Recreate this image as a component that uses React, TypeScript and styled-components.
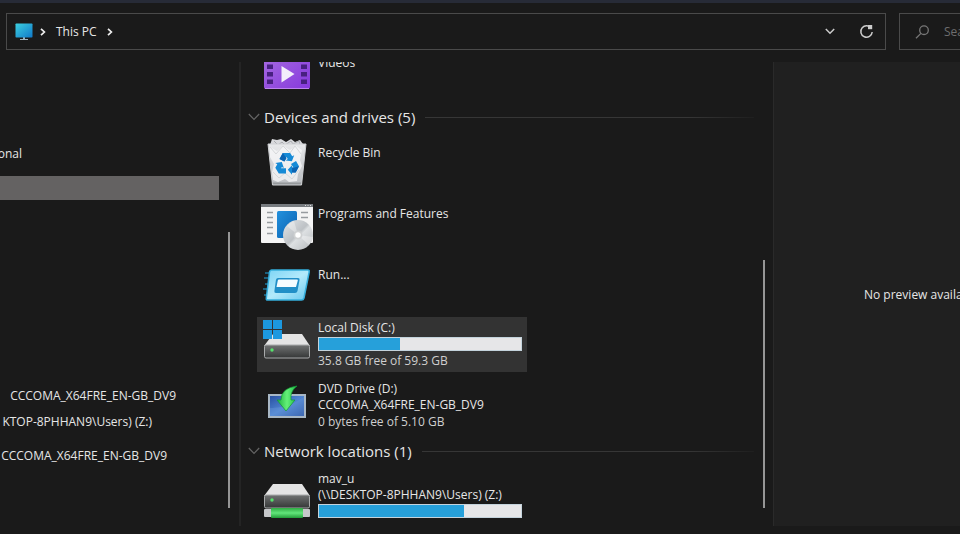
import React from "react";
import styled, { createGlobalStyle } from "styled-components";

const GlobalStyle = createGlobalStyle`
  * { box-sizing: border-box; }
  html, body, #root { height: 100%; }
  body {
    margin: 0;
    overflow: hidden;
    background: #1a1a1a;
    color: #e6e6e6;
    font: 12px/16px "Open Sans", "Noto Sans", sans-serif;
  }
  button, input { font: inherit; color: inherit; }
  svg { display: block; flex: none; }
`;

const Window = styled.div`
  display: flex;
  flex-direction: column;
  height: 100%;
  min-height: 0;
  border-top: 3px solid #272b37;
`;

const Toolbar = styled.header`
  display: grid;
  grid-template-columns: minmax(0, 1fr) 61px;
  gap: 13px;
  padding: 10px 0 12px 6px;
`;

const AddressBar = styled.nav`
  display: flex;
  align-items: center;
  height: 37px;
  padding: 0 11px 0 8px;
  border: 1px solid #4a4a4a;
`;

const Crumb = styled.button`
  display: flex;
  align-items: center;
  padding: 0;
  border: 0;
  background: none;
`;

const CrumbLabel = styled(Crumb)`
  margin: 0 10px;
`;

const Chevron = styled.span`
  padding-left: 7px;
`;

const Actions = styled.div`
  display: flex;
  gap: 24px;
  margin-left: auto;
`;

const IconButton = styled.button`
  padding: 0;
  border: 0;
  background: none;
`;

const SearchBox = styled.label`
  display: flex;
  align-items: center;
  gap: 14px;
  height: 37px;
  padding-left: 15px;
  border: 1px solid #4a4a4a;
  border-right: 0;
  overflow: hidden;
`;

const SearchInput = styled.input`
  flex: 1 0 100px;
  min-width: 0;
  padding: 0;
  border: 0;
  outline: 0;
  background: none;
  &::placeholder { color: #6d6d6d; opacity: 1; }
`;

const Panes = styled.div`
  display: grid;
  grid-template-columns: 241px minmax(0, 1fr) 187px;
  flex: 1;
  min-height: 0;
  margin-bottom: 8px;
`;

const NavPane = styled.aside`
  display: flex;
  border-right: 2px solid #242424;
  overflow: hidden;
`;

const NavTree = styled.div`
  flex: 1;
  padding-top: 78px;
`;

const NavGroup = styled.div<{ $gap?: number }>`
  margin-bottom: ${(p) => p.$gap ?? 0}px;
`;

const NavItem = styled.button<{ $width?: number; $selected?: boolean }>`
  display: flex;
  align-items: center;
  justify-content: flex-end;
  width: ${(p) => (p.$width ? `${p.$width}px` : "100%")};
  height: ${(p) => (p.$selected ? 24 : 26)}px;
  padding: 2px 0 0;
  border: 0;
  background: ${(p) => (p.$selected ? "#646262" : "none")};
  white-space: nowrap;
`;

const ScrollTrack = styled.div<{ $top: number; $side: number }>`
  display: flex;
  padding: ${(p) => p.$top}px ${(p) => p.$side}px 18px 9px;
`;

const ScrollThumb = styled.div`
  width: 2px;
  background: #959595;
`;

const ContentPane = styled.main`
  display: flex;
  min-width: 0;
  overflow: hidden;
`;

const FileList = styled.div`
  flex: 1;
  min-width: 0;
  margin-top: -18px;
  padding-left: 7px;
`;

const Entries = styled.div`
  display: flex;
  flex-direction: column;
  gap: 6px;
  padding-left: 9px;
`;

const GroupHeader = styled.h2`
  display: flex;
  align-items: center;
  height: 35px;
  margin: 0;
  padding-top: 1px;
  font-size: 15px;
  font-weight: 400;
  line-height: 20px;
  white-space: nowrap;
  &::after {
    content: "";
    flex: 1;
    height: 1px;
    margin-left: 10px;
    background: linear-gradient(90deg, #363636 80%, #1f1f1f);
  }
`;

const GroupToggle = styled.button`
  display: flex;
  align-items: center;
  gap: 4px;
  padding: 0;
  border: 0;
  background: none;
`;

const Entry = styled.article<{ $selected?: boolean }>`
  display: grid;
  grid-template-columns: 52px minmax(0, 1fr);
  gap: 5px;
  width: 100%;
  max-width: 270px;
  height: 55px;
  padding: 0 5px 0 4px;
  background: ${(p) => (p.$selected ? "#333333" : "transparent")};
`;

const EntryIcon = styled.div<{ $top: number }>`
  display: flex;
  align-items: flex-start;
  justify-content: center;
  padding-top: ${(p) => p.$top}px;
`;

const EntryText = styled.div<{ $single?: boolean }>`
  padding-top: ${(p) => (p.$single ? 11 : 3)}px;
  white-space: nowrap;
`;

const Note = styled.div`
  margin-top: 1px;
  color: #cfcfcf;
`;

const Meter = styled.div`
  height: 14px;
  margin: 1px 0 2px;
  border: 1px solid #c4d3dc;
  background: #e6e6e8;
`;

const MeterFill = styled.div`
  height: 100%;
  background: #26a0da;
`;

const Preview = styled.aside`
  display: flex;
  align-items: center;
  padding: 2px 0 0 90px;
  border-left: 1px solid #2a2a2a;
  background: #202020;
  white-space: nowrap;
  overflow: hidden;
`;

const ComputerIcon = () => (
  <svg width="18" height="18" viewBox="0 0 18 18">
    <defs>
      <linearGradient id="screen" x1="0" y1="0" x2="1" y2="1">
        <stop offset="0" stopColor="#3cd0e0" /><stop offset="1" stopColor="#1078c8" />
      </linearGradient>
    </defs>
    <path d="M8 14h2v2h3v1H5v-1h3z" fill="#9fb0ba" />
    <rect x="0.5" y="0.5" width="17" height="14" rx="0.8" fill="url(#screen)" />
  </svg>
);

const SmallChevron = () => (
  <svg width="6" height="8" viewBox="0 0 6 8" fill="none" stroke="#eee" strokeWidth="1.7">
    <path d="M1 0.8 4.4 4 1 7.2" />
  </svg>
);

const DownChevron = () => (
  <svg width="10" height="16" viewBox="0 0 10 16" fill="none" stroke="#ccc" strokeWidth="1.5">
    <path d="M0.8 5 5 9.2 9.2 5" />
  </svg>
);

const RefreshIcon = () => (
  <svg width="15" height="16" viewBox="0 0 15 16" fill="none" stroke="#ccc" strokeWidth="1.5">
    <path d="M12.4 4.600A5.700 5.700 0 1 0 13.200 8" />
    <path d="M9 1h4.200v4.200H9z" fill="#ccc" stroke="none" />
  </svg>
);

const SearchIcon = () => (
  <svg width="15" height="16" viewBox="0 0 15 16" fill="none" stroke="#777" strokeWidth="1.3">
    <circle cx="9" cy="6.2" r="4.3" /><path d="M5.9 9.4 1 14.3" />
  </svg>
);

const GroupChevron = () => (
  <svg width="12" height="8" viewBox="0 0 12 8" fill="none" stroke="#646464" strokeWidth="1.2">
    <path d="M0.8 1 6 6.4 11.2 1" />
  </svg>
);

const VideosIcon = () => (
  <svg width="46" height="34" viewBox="0 0 46 34">
    <defs>
      <linearGradient id="film" x1="0" y1="0" x2="1" y2="1">
        <stop offset="0" stopColor="#a66be0" /><stop offset="1" stopColor="#8638dd" />
      </linearGradient>
    </defs>
    <rect width="46" height="34" rx="2" fill="url(#film)" />
    <path d="M1 33.500h44" stroke="#bd83ef" />
    <path d="M3 2h6v4.500H3zM3 9.500h6V14H3zM3 17h6v4.500H3zM3 24.500h6V29H3zM37 2h6v4.500h-6zM37 9.500h6V14h-6zM37 17h6v4.500h-6zM37 24.500h6V29h-6z" fill="#482080" />
    <path d="M17.500 11v16.500L30.500 19z" fill="#f3eefb" />
  </svg>
);

const RecycleIcon = () => (
  <svg width="40" height="48" viewBox="0 0 40 48">
    <defs>
      <linearGradient id="bin" x1="0" y1="0" x2="0" y2="1">
        <stop offset="0" stopColor="#e8e9eb" /><stop offset="1" stopColor="#b9bcc0" />
      </linearGradient>
    </defs>
    <path d="M3 7 5 1l5 1 4-1 5 3 5-3 4 3 5-2 3 4 1 4H3z" fill="#d9dadd" />
    <path d="m7 3 4 4 4-3 3 3 6-4 2 3 6-3 1 4" stroke="#aaacaf" fill="none" />
    <path d="M1 6h38l-4.5 41h-29z" fill="url(#bin)" />
    <path d="m3 9 7 4 6-5 7 4 6-4 6 4-2 10 2 6-4 8-1 7-8 1-4-3-7 3-5-2-1-8 2-8-4-7z" fill="#f8f8f9" opacity="0.75" />
    <path d="m3 9 6 7 7-8 7 7 5-7 6 8M6 34l6 6 6-5 7 6 7-9" stroke="#d6d8da" fill="none" />
    <path d="M6 44.500h28l-.3 2.500H6.300z" fill="#96999b" />
    <path d="M1 6h38M1 6l4.5 41h29L39 6" stroke="#cfd1d4" fill="none" />
    <g fill="#168ad6">
      <path d="m12.5 21 3.3-6h7.4l2 3.2 2-1-2.3 6-6.3-.8 2.2-1.4-1.4-2-2.3 4.5z" />
      <path d="m24 26 5-3 3 5.2-3.3 6.3H25v2.3l-4.2-5 4.2-4.5v2.4h1.6z" />
      <path d="M19 35.5h-7.2l-3.5-5.7 2-3.5-2-1.2 6.5-1.1 2.1 6-2-1.1-.9 1.3h5z" />
    </g>
    <path d="m12.5 21 5 2.6 2-3.4-3.7-5.2z" fill="#0c64b3" />
    <path d="m32 28.2-3.3 6.3H25v-4.9h2.5z" fill="#0c64b3" />
  </svg>
);

const ProgramsIcon = () => (
  <svg width="52" height="46" viewBox="0 0 52 46">
    <defs>
      <linearGradient id="page" x1="0" y1="0" x2="1" y2="1">
        <stop offset="0" stopColor="#2391dd" /><stop offset="1" stopColor="#0960b0" />
      </linearGradient>
      <linearGradient id="disc" x1="0" y1="0" x2="1" y2="1">
        <stop offset="0" stopColor="#e4e7e9" /><stop offset="0.48" stopColor="#bdc1c5" />
        <stop offset="0.55" stopColor="#dde0e2" /><stop offset="1" stopColor="#b4b8bb" />
      </linearGradient>
    </defs>
    <rect width="52" height="39" rx="1" fill="#f4f4f4" />
    <path d="M0 0h52v3H0z" fill="#777b7f" />
    <path d="M44 1.500h1M46.5 1.500h1M49 1.500h1" stroke="#ddd" />
    <path d="M6 8.500h6M6 13.500h6M6 18.500h6M6 23.500h6M6 29.500h6M40 8.500h7M40 13.500h7" stroke="#969b9f" strokeWidth="1.500" />
    <rect x="16" y="7" width="20" height="27" rx="1.500" fill="url(#page)" />
    <circle cx="37" cy="31" r="15" fill="url(#disc)" />
    <path d="m37 31-11-9a15 15 0 0 1 7-5zM37 31l11 10a15 15 0 0 0 4-8z" fill="#fff" opacity="0.35" />
    <circle cx="37" cy="31" r="4.500" fill="#cfd1d2" /><circle cx="37" cy="31" r="2.700" fill="#fff" />
  </svg>
);

const RunIcon = () => (
  <svg width="48" height="32" viewBox="0 0 48 32">
    <defs>
      <linearGradient id="run" x1="0" y1="0" x2="1" y2="1">
        <stop offset="0" stopColor="#7bd4f5" /><stop offset="0.5" stopColor="#b3eafb" /><stop offset="1" stopColor="#66c7ee" />
      </linearGradient>
    </defs>
    <path d="M2 4h5M1 9h5M2 15h4M0 20h5M1 26h4" stroke="#1c5f7b" strokeWidth="2" />
    <path d="M8.500 1H45q1.500 0 1.200 2L41 29q-.5 2-2.500 2H4.500q-1.500 0-1.200-2L6.500 3q.4-2 2-2z" fill="url(#run)" stroke="#35aedc" strokeWidth="1.500" />
    <path d="M15 9h20q2 0 1.500 2l-2 11q-.5 2-2.500 2H13q-2 0-1.600-2l1.500-11q.4-2 2.100-2z" fill="#218fc7" />
    <path d="M16 10.500h18q1 0 .8 1L33 18H13.500l1.300-6.500q.2-1 1.200-1z" fill="#f4fcff" />
  </svg>
);

const DriveBody = ({ y }: { y: number }) => (
  <g>
    <path d={`M9 ${y}h29l8 12H0z`} fill="#e4e4e4" />
    <rect x="0.5" y={y + 11} width="45" height="13" rx="1.500" fill="url(#drive)" stroke="#a9abac" />
    <circle cx="8" cy={y + 16} r="1.700" fill="#55e26b" />
  </g>
);

const DriveGradient = () => (
  <defs>
    <linearGradient id="drive" x1="0" y1="0" x2="0" y2="1">
      <stop offset="0" stopColor="#707272" /><stop offset="1" stopColor="#353737" />
    </linearGradient>
    <linearGradient id="cable" x1="0" y1="0" x2="0" y2="1">
      <stop offset="0" stopColor="#2fab43" /><stop offset="0.5" stopColor="#62e67b" /><stop offset="1" stopColor="#229b38" />
    </linearGradient>
  </defs>
);

const LocalDiskIcon = () => (
  <svg width="48" height="40" viewBox="-1 -1 48 40">
    <DriveGradient />
    <DriveBody y={14} />
    <path d="M-1 0h9v9h-9zM9 0h9v9H9zM-1 10h9v9h-9zM9 10h9v9H9z" fill="#1c98df" />
  </svg>
);

const DvdIcon = () => (
  <svg width="38" height="34" viewBox="0 0 38 34">
    <defs>
      <linearGradient id="dvd" x1="0" y1="0" x2="1" y2="1">
        <stop offset="0" stopColor="#264d9e" /><stop offset="0.5" stopColor="#4f84d1" /><stop offset="1" stopColor="#244b9c" />
      </linearGradient>
      <linearGradient id="arrow" x1="0" y1="0" x2="1" y2="0">
        <stop offset="0" stopColor="#1caf3f" /><stop offset="0.5" stopColor="#64f078" /><stop offset="1" stopColor="#1dbb45" />
      </linearGradient>
    </defs>
    <rect x="1" y="10" width="36" height="22" fill="url(#dvd)" stroke="#a8b7c5" strokeWidth="2" />
    <path d="M2 23Q18 24 36 12v19H2z" fill="#7eb0e8" opacity="0.25" />
    <path d="M29 1Q13 3 13 15H9l9 11 9-11h-4Q22 6 29 1z" fill="url(#arrow)" stroke="#159536" strokeWidth="0.700" />
  </svg>
);

const NetworkDriveIcon = () => (
  <svg width="46" height="36" viewBox="0 0 46 36">
    <DriveGradient />
    <DriveBody y={0} />
    <rect x="0" y="25" width="46" height="8" rx="1" fill="#c5c7c9" />
    <rect x="7" y="24" width="32" height="10" rx="1" fill="url(#cable)" />
  </svg>
);

type Item = {
  icon: React.ReactNode;
  iconTop: number;
  lines: string[];
  used?: number;
  note?: string;
  selected?: boolean;
};

const devices: Item[] = [
  { icon: <RecycleIcon />, iconTop: 4, lines: ["Recycle Bin"] },
  { icon: <ProgramsIcon />, iconTop: 9, lines: ["Programs and Features"] },
  { icon: <RunIcon />, iconTop: 13, lines: ["Run..."] },
  { icon: <LocalDiskIcon />, iconTop: 2, lines: ["Local Disk (C:)"], used: 40, note: "35.8 GB free of 59.3 GB", selected: true },
  { icon: <DvdIcon />, iconTop: 7, lines: ["DVD Drive (D:)", "CCCOMA_X64FRE_EN-GB_DV9"], note: "0 bytes free of 5.10 GB" },
];

const network: Item[] = [
  { icon: <NetworkDriveIcon />, iconTop: 16, lines: ["mav_u", "(\\\\DESKTOP-8PHHAN9\\Users) (Z:)"], used: 72 },
];

const FileEntry = ({ icon, iconTop, lines, used, note, selected }: Item) => (
  <Entry $selected={selected}>
    <EntryIcon $top={iconTop}>{icon}</EntryIcon>
    <EntryText $single={lines.length === 1 && !note}>
      {lines.map((line) => <div key={line}>{line}</div>)}
      {used !== undefined && (
        <Meter role="meter" aria-label="Space used" aria-valuenow={used} aria-valuemin={0} aria-valuemax={100}>
          <MeterFill style={{ width: `${used}%` }} />
        </Meter>
      )}
      {note && <Note>{note}</Note>}
    </EntryText>
  </Entry>
);

const Group = ({ title, items }: { title: string; items: Item[] }) => (
  <section>
    <GroupHeader>
      <GroupToggle aria-expanded="true"><GroupChevron />{title}</GroupToggle>
    </GroupHeader>
    <Entries>{items.map((item) => <FileEntry key={item.lines[0]} {...item} />)}</Entries>
  </section>
);

export default function App() {
  return (
    <>
      <GlobalStyle />
      <Window>
        <Toolbar>
          <AddressBar aria-label="Address">
            <Crumb aria-label="Computer"><ComputerIcon /></Crumb>
            <Chevron><SmallChevron /></Chevron>
            <CrumbLabel>This PC</CrumbLabel>
            <SmallChevron />
            <Actions>
              <IconButton aria-label="Previous locations"><DownChevron /></IconButton>
              <IconButton aria-label="Refresh"><RefreshIcon /></IconButton>
            </Actions>
          </AddressBar>
          <SearchBox>
            <SearchIcon />
            <SearchInput aria-label="Search" placeholder="Search This PC" />
          </SearchBox>
        </Toolbar>
        <Panes>
          <NavPane>
            <NavTree>
              <NavGroup $gap={10}><NavItem $width={22}>onal</NavItem></NavGroup>
              <NavGroup $gap={182}><NavItem $selected aria-label="This PC" /></NavGroup>
              <NavGroup $gap={8}>
                <NavItem $width={176}>CCCOMA_X64FRE_EN-GB_DV9</NavItem>
                <NavItem $width={152}>KTOP-8PHHAN9\Users) (Z:)</NavItem>
              </NavGroup>
              <NavGroup><NavItem $width={167}>CCCOMA_X64FRE_EN-GB_DV9</NavItem></NavGroup>
            </NavTree>
            <ScrollTrack $top={170} $side={9}><ScrollThumb /></ScrollTrack>
          </NavPane>
          <ContentPane>
            <FileList>
              <Entries><FileEntry icon={<VideosIcon />} iconTop={11} lines={["Videos"]} /></Entries>
              <Group title="Devices and drives (5)" items={devices} />
              <Group title="Network locations (1)" items={network} />
            </FileList>
            <ScrollTrack $top={198} $side={8}><ScrollThumb /></ScrollTrack>
          </ContentPane>
          <Preview>No preview available.</Preview>
        </Panes>
      </Window>
    </>
  );
}
